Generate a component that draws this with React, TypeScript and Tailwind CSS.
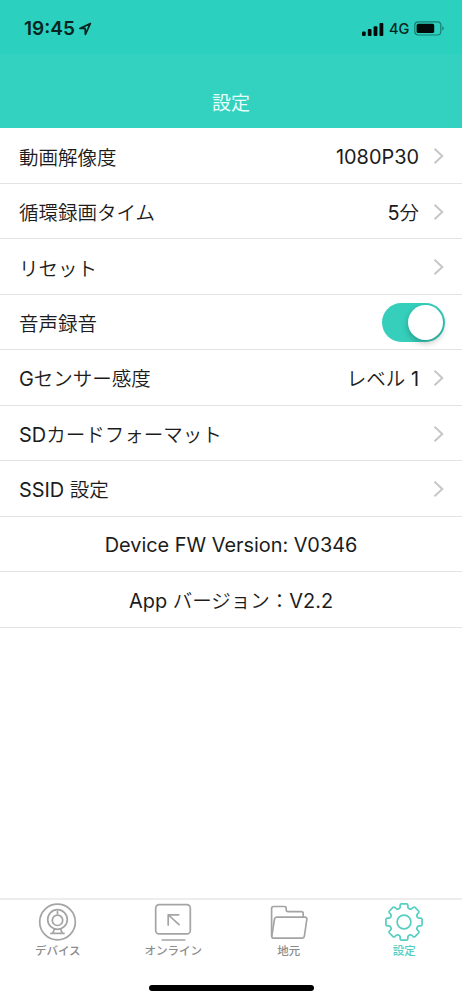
import React from "react";
import clsx from "clsx";

type Row = {
    label: string;
    value?: string;
    toggle?: boolean;
}

const rows: Row[] = [
    { label: "動画解像度", value: "1080P30" },
    { label: "循環録画タイム", value: "5分" },
    { label: "リセット" },
    { label: "音声録音", toggle: true },
    { label: "Gセンサー感度", value: "レベル 1" },
    { label: "SDカードフォーマット" },
    { label: "SSID 設定" },
]

const versions = ["Device FW Version: V0346", "App バージョン：V2.2"]

// Outline of the eight-toothed gear, centred on 20,20
const gearPath = () => {
    const pt = (r: number, deg: number) => {
        const a = ((deg - 90) * Math.PI) / 180
        return `${(20 + r * Math.cos(a)).toFixed(2)} ${(20 + r * Math.sin(a)).toFixed(2)}`
    }
    let d = `M${pt(15, -15)}`
    for (let tooth = 0; tooth < 360; tooth += 45) {
        d += `L${pt(17.2, tooth - 13)}Q${pt(18.2, tooth - 12)} ${pt(18.3, tooth - 9)}`
        d += `L${pt(18.3, tooth + 9)}Q${pt(18.2, tooth + 12)} ${pt(17.2, tooth + 13)}`
        d += `L${pt(15, tooth + 15)}Q${pt(13.4, tooth + 22.5)} ${pt(15, tooth + 30)}`
    }
    return `${d}Z`
}

// Latin runs are set slightly larger and heavier than the kana and kanji
const Mixed: React.FC<{ text: string }> = ({ text }) => (
    <span className="whitespace-pre">
        {text.split(/([ -~]+)/).filter(Boolean).map((run, i) => (
            <span key={i} className={/^[ -~]/.test(run) ? "text-[19.9px]" : "text-[19.5px] font-[350]"}>{run}</span>
        ))}
    </span>
)

const StatusBar: React.FC = () => (
    <div className="h-[54px] bg-[#2bd0be] pl-6 pr-[17px] pt-[19px] flex justify-between text-[#08251f]">
        <div className="flex h-5 items-center">
            <span className="text-[19px] leading-5 font-semibold w-[52px] whitespace-nowrap">19:45</span>
            <svg width="14" height="14" viewBox="0 0 14 14" fill="none" stroke="currentColor" strokeWidth="1.7" strokeLinejoin="round" className="ml-0.5 -mt-px">
                <path d="M12.4 1.4 1.8 6.4h5.3l.3 6z" />
            </svg>
        </div>
        <div className="flex h-5 items-center">
            <svg width="22" height="13" viewBox="0 0 22 13" fill="#020b09">
                <rect x="0" y="8.5" width="3.7" height="4.5" rx="1" />
                <rect x="5.8" y="6" width="3.7" height="7" rx="1" />
                <rect x="11.6" y="3.2" width="3.8" height="9.8" rx="1" />
                <rect x="17.5" y="0" width="3.8" height="13" rx="1" />
            </svg>
            <span className="ml-[5px] w-[21px] text-[14.5px] leading-5 font-medium whitespace-nowrap">4G</span>
            <svg width="31" height="15" viewBox="0 0 31 15" fill="none" className="ml-[4px] -mt-px">
                <rect x="0.8" y="0.8" width="26" height="13.2" rx="3.5" stroke="#167f72" strokeWidth="1.2" />
                <rect x="2.6" y="2.8" width="17.6" height="9.2" rx="1.6" fill="#020b09" />
                <path d="M28.3 5.3c1.9.6 1.9 3.6 0 4.2z" fill="#167f72" />
            </svg>
        </div>
    </div>
)

const Chevron: React.FC = () => (
    <svg width="12" height="18" viewBox="0 0 12 18" fill="none" stroke="#c7c7cb" strokeWidth="2" className="ml-3.5">
        <path d="M1.5 1.7 9.3 9l-7.8 7.3" />
    </svg>
)

const Toggle: React.FC = () => (
    <div className="h-[39px] w-[63px] rounded-full bg-[#35cfbb] p-[2px] flex justify-end">
        <div className="size-[35px] rounded-full bg-white shadow-[0_3px_6px_rgba(0,0,0,0.25)]" />
    </div>
)

const SettingsRow: React.FC<Row> = ({ label, value, toggle }) => (
    <li className="h-[55.5px] border-b border-[#e3e3e5] pl-[19px] pr-[17px] pt-[2px] flex items-center justify-between">
        <div className="pt-[4px]"><Mixed text={label} /></div>
        <div className="flex items-center">
            {value && <div className="pt-[4px]"><Mixed text={value} /></div>}
            {toggle ? <Toggle /> : <Chevron />}
        </div>
    </li>
)

const tabs = [
    {
        name: "デバイス",
        icon: (
            <>
                <circle cx="19.5" cy="20" r="17.8" />
                <circle cx="19.5" cy="17.5" r="9.8" />
                <circle cx="19.5" cy="18.3" r="5.2" />
                <path d="M19.5 9.5v2.2M16.3 27.2l-1.6 4.2M22.7 27.2l1.6 4.2M13 31.4h13" />
            </>
        ),
    },
    {
        name: "オンライン",
        icon: (
            <>
                <rect x="2.7" y="2.7" width="34.6" height="29.2" rx="3.5" />
                <path d="M9.3 38h22.4M15.2 23v-10.2h10.5M15.5 13l10.5 9.7" />
            </>
        ),
    },
    {
        name: "地元",
        icon: (
            <>
                <path d="M2.6 34V6.5q0-2 2-2h11q1.6 0 1.6 1.6v2q0 1.5 1.5 1.5h13.5q2 0 2 2v3.5" />
                <path d="M7.6 15.2h28.2q2.4 0 2 2.3l-2.4 16.5q-.3 2.2-2.5 2.2H5q-2.5 0-2.2-2.4L5.5 17q.3-1.8 2.1-1.8z" />
            </>
        ),
    },
    {
        name: "設定",
        active: true,
        icon: (
            <>
                <path d={gearPath()} />
                <circle cx="20" cy="20" r="6.9" />
            </>
        ),
    },
]

const TabBar: React.FC = () => (
    <nav className="h-[102px] border-t-2 border-[#ededed] pt-[2px]">
        <div className="grid grid-cols-4">
            {tabs.map((tab) => (
                <div key={tab.name} className={clsx("flex flex-col items-center", tab.active ? "text-[#55cfc0]" : "text-[#a4a4a4]")}>
                    <svg width="40" height="40" viewBox="0 0 40 40" fill="none" stroke="currentColor" strokeWidth="1.7" strokeLinecap="round" strokeLinejoin="round">
                        {tab.icon}
                    </svg>
                    <span className={clsx("mt-px text-[11.5px] leading-4 font-medium", !tab.active && "text-[#8c8c8c]")}>{tab.name}</span>
                </div>
            ))}
        </div>
        {/* Home indicator */}
        <div className="mx-auto mt-[26px] h-[6px] w-[165px] rounded-full bg-black" />
    </nav>
)

const App: React.FC = () => {
    return (
        <div className="h-[1000px] w-[462px] overflow-hidden bg-white flex flex-col text-[#1c1c1c] font-['Inter','Noto_Sans_CJK_JP',sans-serif]" lang="ja">
            <header className="h-32 bg-[#33d1bf]">
                <StatusBar />
                <h1 className="pt-[38px] text-center text-[19px] leading-6 text-[#e4fffb]">設定</h1>
            </header>

            <ul className="flex-1 text-[19.5px]">
                {rows.map((row) => <SettingsRow key={row.label} {...row} />)}
                {versions.map((text) => (
                    <li key={text} className="h-[55.5px] border-b border-[#e3e3e5] pt-[5px] flex items-center justify-center">
                        <Mixed text={text} />
                    </li>
                ))}
            </ul>

            <TabBar />
        </div>
    )
}

export default App
